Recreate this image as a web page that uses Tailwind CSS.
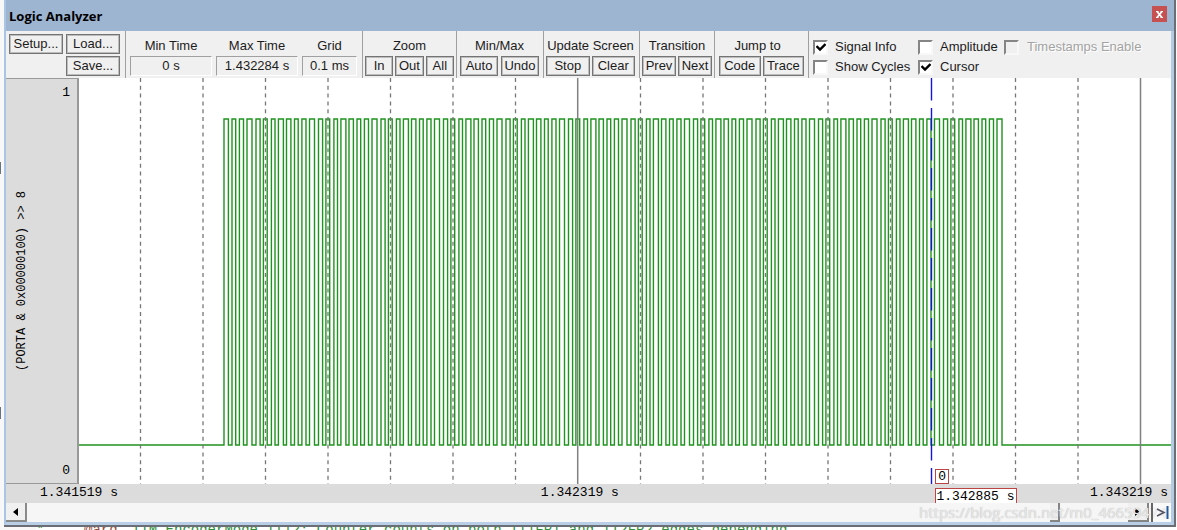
<!DOCTYPE html>
<html lang="en">
<head>
<meta charset="utf-8">
<meta name="viewport" content="width=device-width, initial-scale=1">
<title>Logic Analyzer</title>
<script src="https://cdn.jsdelivr.net/npm/@tailwindcss/browser@4"></script>
</head>
<body class="relative flex h-screen flex-col overflow-hidden bg-[#f8f8f8] font-['Liberation_Sans',sans-serif] text-[13px] leading-4 text-[#1c1c1c]">
<span class="absolute left-0 top-[162px] h-3 w-px bg-gray-500"></span>
<span class="absolute left-0 top-[407px] h-3 w-px bg-gray-500"></span>
<main class="ml-1 mr-px flex min-h-0 flex-1 flex-col border-b-2 border-r-2 border-[#6b6f75]">
  <div class="flex min-h-0 flex-1 flex-col border-b-3 border-l-2 border-r-3 border-b-[#b9cfe8] border-l-[#a9c4e4] border-r-[#b4cbe4]">
    <header class="-mr-[3px] flex h-[31px] shrink-0 items-center justify-between bg-[#9db5d1] pl-[3px] pr-[7px]">
      <h1 class="font-['Open_Sans',sans-serif] text-[13px] font-bold text-black">Logic Analyzer</h1>
      <button aria-label="Close" class="mb-[3px] flex h-4 w-[15px] items-center justify-center bg-[#c75050]">
        <svg width="7" height="7" viewBox="0 0 7 7" fill="none" stroke="#fff"><path d="M1 .5 6 6.5M6 .5 1 6.5" stroke-width="1.7"/><path d="M0 .5h2.5M4.5.5H7M0 6.5h2.5M4.5 6.5H7"/></svg>
      </button>
    </header>
    <section aria-label="Toolbar" class="flex h-[47px] shrink-0 overflow-hidden bg-[#f0f0f0]">
      <div class="grid w-[119px] shrink-0 grid-cols-[54px_54px] content-start gap-x-[3px] gap-y-[2px] pl-[3px] pt-[3px]">
        <button class="h-5 border border-[#747474] shadow-[inset_0_0_0_1px_#bdbdbd]">Setup...</button>
        <button class="h-5 border border-[#747474] shadow-[inset_0_0_0_1px_#bdbdbd]">Load...</button>
        <button class="col-start-2 h-5 border border-[#747474] shadow-[inset_0_0_0_1px_#bdbdbd]">Save...</button>
      </div>
      <div class="flex w-[237px] shrink-0 gap-1 border-l border-[#a0a0a0] pl-1 pt-[7px] text-center">
        <div class="w-[82px]">Min Time<output class="mt-[2px] block h-5 border border-b-white border-l-[#a0a0a0] border-r-white border-t-[#a0a0a0] pt-px">0 s</output></div>
        <div class="w-[82px]">Max Time<output class="mt-[2px] block h-5 border border-b-white border-l-[#a0a0a0] border-r-white border-t-[#a0a0a0] pt-px">1.432284 s</output></div>
        <div class="w-[55px]">Grid<output class="mt-[2px] block h-5 border border-b-white border-l-[#a0a0a0] border-r-white border-t-[#a0a0a0] pt-px">0.1 ms</output></div>
      </div>
      <div class="w-[94px] shrink-0 border-l border-[#a0a0a0] px-[2px] pt-[7px] text-center">Zoom
        <div class="mt-[2px] grid grid-cols-3 gap-[2px]"><button class="h-5 border border-[#747474] shadow-[inset_0_0_0_1px_#bdbdbd]">In</button><button class="h-5 border border-[#747474] shadow-[inset_0_0_0_1px_#bdbdbd]">Out</button><button class="h-5 border border-[#747474] shadow-[inset_0_0_0_1px_#bdbdbd]">All</button></div>
      </div>
      <div class="w-[87px] shrink-0 border-l border-[#a0a0a0] pl-[3px] pr-1 pt-[7px] text-center">Min/Max
        <div class="mt-[2px] grid grid-cols-2 gap-[3px]"><button class="h-5 border border-[#747474] shadow-[inset_0_0_0_1px_#bdbdbd]">Auto</button><button class="h-5 border border-[#747474] shadow-[inset_0_0_0_1px_#bdbdbd]">Undo</button></div>
      </div>
      <div class="w-[96px] shrink-0 whitespace-nowrap border-l border-[#a0a0a0] pl-[2px] pr-1 pt-[7px] text-center">Update Screen
        <div class="mt-[2px] grid grid-cols-2 gap-[2px]"><button class="h-5 border border-[#747474] shadow-[inset_0_0_0_1px_#bdbdbd]">Stop</button><button class="h-5 border border-[#747474] shadow-[inset_0_0_0_1px_#bdbdbd]">Clear</button></div>
      </div>
      <div class="w-[75px] shrink-0 border-l border-[#a0a0a0] px-[2px] pt-[7px] text-center">Transition
        <div class="mt-[2px] grid grid-cols-2 gap-[2px]"><button class="h-5 border border-[#747474] shadow-[inset_0_0_0_1px_#bdbdbd]">Prev</button><button class="h-5 border border-[#747474] shadow-[inset_0_0_0_1px_#bdbdbd]">Next</button></div>
      </div>
      <div class="w-[94px] shrink-0 border-l border-[#a0a0a0] pl-1 pr-1 pt-[7px] text-center"><span class="pr-2">Jump to</span>
        <div class="mt-[2px] grid grid-cols-2 gap-[2px]"><button class="h-5 border border-[#747474] shadow-[inset_0_0_0_1px_#bdbdbd]">Code</button><button class="h-5 border border-[#747474] shadow-[inset_0_0_0_1px_#bdbdbd]">Trace</button></div>
      </div>
      <div class="grid shrink-0 grid-cols-[105px_86px_auto] content-start gap-y-1 border-l border-[#a0a0a0] pl-1 pt-2">
        <label class="relative flex items-center gap-[7px]"><input type="checkbox" checked class="peer h-[15px] w-[15px] appearance-none border-2 border-b-[#f8f8f8] border-l-[#858585] border-r-[#f8f8f8] border-t-[#858585] bg-white"><svg class="pointer-events-none absolute left-[3px] top-1 hidden peer-checked:block" width="10" height="9" viewBox="0 0 10 9" fill="none" stroke="#000" stroke-width="2.4"><path d="M.5 3 4 6.5 9.5 1"/></svg>Signal Info</label>
        <label class="flex items-center gap-[7px]"><input type="checkbox" class="h-[15px] w-[15px] appearance-none border-2 border-b-[#f8f8f8] border-l-[#858585] border-r-[#f8f8f8] border-t-[#858585] bg-white">Amplitude</label>
        <label class="flex items-center gap-2 text-[#a3a3a3]"><input type="checkbox" disabled class="h-[15px] w-[15px] appearance-none border-2 border-b-[#f8f8f8] border-l-[#858585] border-r-[#f8f8f8] border-t-[#858585] bg-[#f0f0f0]"><span class="[text-shadow:1px_1px_0_#fff]">Timestamps Enable</span></label>
        <label class="flex items-center gap-[7px]"><input type="checkbox" class="h-[15px] w-[15px] appearance-none border-2 border-b-[#f8f8f8] border-l-[#858585] border-r-[#f8f8f8] border-t-[#858585] bg-white">Show Cycles</label>
        <label class="relative flex items-center gap-[7px]"><input type="checkbox" checked class="peer h-[15px] w-[15px] appearance-none border-2 border-b-[#f8f8f8] border-l-[#858585] border-r-[#f8f8f8] border-t-[#858585] bg-white"><svg class="pointer-events-none absolute left-[3px] top-1 hidden peer-checked:block" width="10" height="9" viewBox="0 0 10 9" fill="none" stroke="#000" stroke-width="2.4"><path d="M.5 3 4 6.5 9.5 1"/></svg>Cursor</label>
      </div>
    </section>
    <section class="flex min-h-0 flex-1 bg-white font-['Liberation_Mono',monospace] text-black">
      <div class="flex w-[73px] shrink-0 justify-between border-b border-r-2 border-t border-[#999] bg-[#dcdcdc] pl-2 pr-[7px]">
        <div class="flex rotate-180 items-center justify-center text-xs leading-4 [writing-mode:vertical-rl]">(PORTA &amp; 0x00000100) &gt;&gt; 8</div>
        <div class="flex flex-col justify-between pb-1 pt-[6px]"><span>1</span><span>0</span></div>
      </div>
      <div class="relative min-w-0 flex-1">
        <svg class="absolute inset-0 h-full w-full" viewBox="0 0 1092 406" preserveAspectRatio="none" fill="none" role="img" aria-label="Signal trace">
          <path id="wave" stroke="#1f931f" stroke-width="1.4"/>
          <path id="grid" stroke="#777" stroke-width="1.3" stroke-dasharray="4 3.8"/>
          <path d="M498.7 0V406M1061.5 0V406" stroke="#808080" stroke-width="1.5"/>
          <path d="M852.5 0V406" stroke="#1414e6" stroke-width="1.4" stroke-dasharray="22.5 7.5"/>
        </svg>
        <span class="absolute bottom-0 left-[78.4%] h-[15px] w-[14px] border border-[#b44] bg-white text-center leading-[14px]">0</span>
      </div>
    </section>
    <div class="relative flex h-[19px] shrink-0 bg-[#dcdcdc] pl-[34px] pr-[3px] pt-px font-['Liberation_Mono',monospace] text-black">
      <span class="w-[44.400%]">1.341519 s</span><span>1.342319 s</span><span class="ml-auto">1.343219 s</span>
      <span class="absolute left-[79.7%] top-1 h-[15px] w-[82px] overflow-hidden border border-b-0 border-[#b44] bg-white pl-px leading-4">1.342885 s</span>
    </div>
    <div class="relative flex h-[19px] shrink-0 bg-[#f6f6f6]">
      <button aria-label="Scroll left" class="flex w-[21px] items-center justify-center border-b-2 border-r-2 border-[#8b8b8b] bg-[#f0f0f0]"><svg width="5" height="8" viewBox="0 0 5 8"><path d="M5 0V8L0 4z"/></svg></button>
      <div class="flex flex-1 justify-end pr-[68px]"><span class="w-[10px] border-b-2 border-r-2 border-[#858585] bg-[#f0f0f0]"></span></div>
      <button aria-label="Scroll right" class="flex w-[21px] items-center justify-center border-b-2 border-r-2 border-[#858585] bg-[#f0f0f0]"><svg width="5" height="8" viewBox="0 0 5 8"><path d="M0 0V8L5 4z"/></svg></button>
      <span class="pointer-events-none absolute right-1 top-px whitespace-nowrap font-['Open_Sans',sans-serif] text-[15px] leading-4 text-[#e9e9e9] [text-shadow:0_0_1px_#aaa]">https://blog.csdn.net/m0_46659474</span>
      <button aria-label="Jump to end" class="relative ml-[2px] flex w-5 items-center justify-center border-l-2 border-[#666] bg-white/40"><svg width="14" height="13" viewBox="0 0 14 13" fill="none"><path d="M2 3l7 3.500-7 3.500" stroke="#556" stroke-width="1.6"/><path d="M12.500 0V13" stroke="#24599b" stroke-width="2"/></svg></button>
    </div>
  </div>
</main>
<div class="ml-9 flex h-[3px] shrink-0 overflow-hidden whitespace-pre bg-white font-['Liberation_Mono',monospace] text-sm leading-[7px] text-[#2f8f3a]"><span class="w-12">*</span><span class="w-12 text-[#9a4a3a]">@arg</span><span>TIM_EncoderMode_TI12: Counter counts on both TI1FP1 and TI2FP2 edges depending</span></div>
<script>
  // Pulse offsets and widths inside one grid division, in plot units.
  const starts = [0, 8, 15.4, 23, 32, 39.4, 47.4, 54.4];
  const widths = [4.4, 3.7, 4.1, 5, 4.1, 3.8, 3.6, 5];
  let d = 'M0 367';
  for (let i = 0; i < 100; i++) {
    const x = 145 + Math.floor(i / 8) * 62.5 + starts[i % 8];
    d += `H${x}V41H${x + widths[i % 8]}V367`;
  }
  document.getElementById('wave').setAttribute('d', d + 'H1092');
  let g = '';
  for (let i = 0; i < 16; i++) if (i !== 7) g += `M${61.5 + i * 62.5} 0V406`;
  document.getElementById('grid').setAttribute('d', g);
</script>
</body>
</html>
